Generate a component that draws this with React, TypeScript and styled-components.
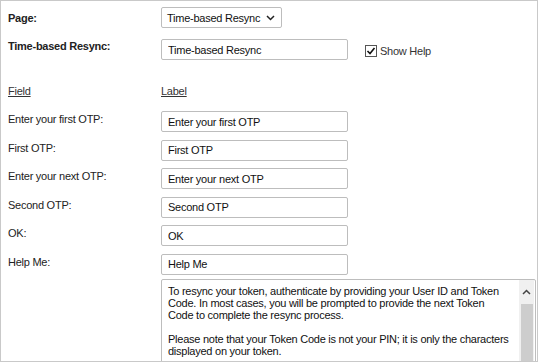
import React, { FC, useState } from 'react';
import styled, { createGlobalStyle } from 'styled-components';

const GlobalStyle = createGlobalStyle`
    html, body {
        margin: 0;
        padding: 0;
        background: #fff;
    }
    body {
        font-family: 'Liberation Sans', Arial, sans-serif;
        font-size: 11px;
        letter-spacing: -0.25px;
        color: #222;
    }
`;

const Frame = styled.div`
    box-sizing: border-box;
    width: 538px;
    height: 362px;
    border: 1px solid #c9c9c9;
    overflow: hidden;
    padding: 5px 0 0 7px;
`;

const Row = styled.div<{ $height: number }>`
    display: flex;
    align-items: flex-start;
    height: ${(p) => p.$height}px;
`;

const Label = styled.div<{ $bold?: boolean; $offset?: number }>`
    width: 153px;
    flex: none;
    font-weight: ${(p) => (p.$bold ? 'bold' : 'normal')};
    padding-top: ${(p) => p.$offset ?? 0}px;
`;

const HeaderLink = styled.span`
    width: 153px;
    flex: none;
    text-decoration: underline;
    color: #333;
`;

const Select = styled.div`
    box-sizing: border-box;
    width: 121px;
    height: 21px;
    margin-top: 1px;
    border: 1px solid #bdbdbd;
    border-radius: 2px;
    display: flex;
    align-items: center;
    justify-content: space-between;
    padding: 0 6px 0 5px;
    color: #111;
`;

const Input = styled.input`
    box-sizing: border-box;
    width: 187px;
    height: 21px;
    border: 1px solid #bdbdbd;
    border-radius: 2px;
    padding: 0 6px;
    font-family: inherit;
    font-size: 11px;
    letter-spacing: -0.25px;
    color: #111;
    margin: 0;
    outline: none;
`;

const CheckLabel = styled.label`
    display: flex;
    align-items: center;
    gap: 3px;
    margin: 6px 0 0 17px;
    color: #333;
`;

const CheckBox = styled.span`
    box-sizing: border-box;
    width: 12px;
    height: 12px;
    border: 1px solid #555;
    display: flex;
    align-items: center;
    justify-content: center;
    background: #fff;
`;

const HelpBox = styled.div`
    box-sizing: border-box;
    margin-left: 153px;
    width: 375px;
    height: 100px;
    border: 1px solid #bdbdbd;
    border-radius: 2px;
    display: flex;
`;

const HelpText = styled.div`
    flex: 1;
    padding: 5px 10px 5px 6px;
    line-height: 12px;
    color: #111;
`;

const Para = styled.p`
    margin: 0 0 12px;
`;

const Scrollbar = styled.div`
    width: 15px;
    margin-right: 1px;
    background: #f0f0f0;
    display: flex;
    flex-direction: column;
    align-items: center;
`;

const ScrollArrow = styled.div`
    height: 24px;
    display: flex;
    align-items: center;
`;

const Thumb = styled.div`
    width: 12px;
    flex: 1;
    background: #cdcdcd;
`;

const fields: { field: string; label: string; height: number }[] = [
    { field: 'Enter your first OTP:', label: 'Enter your first OTP', height: 28.5 },
    { field: 'First OTP:', label: 'First OTP', height: 28.5 },
    { field: 'Enter your next OTP:', label: 'Enter your next OTP', height: 28.5 },
    { field: 'Second OTP:', label: 'Second OTP', height: 28.5 },
    { field: 'OK:', label: 'OK', height: 28.5 },
    { field: 'Help Me:', label: 'Help Me', height: 25 },
];

const Chevron: FC = () => (
    <svg width="9" height="6" viewBox="0 0 9 6">
        <path d="M1 1l3.5 3.5L8 1" fill="none" stroke="#222" strokeWidth="1.5" />
    </svg>
);

const App: FC = () => {
    const [showHelp] = useState<boolean>(true);

    return (
        <>
            <GlobalStyle />
            <Frame>
                <Row $height={33}>
                    <Label $bold $offset={6}>Page:</Label>
                    <Select>
                        <span>Time-based Resync</span>
                        <Chevron />
                    </Select>
                </Row>
                <Row $height={46}>
                    <Label $bold $offset={1}>Time-based Resync:</Label>
                    <Input defaultValue="Time-based Resync" />
                    <CheckLabel>
                        <CheckBox>
                            {showHelp && (
                                <svg width="10" height="10" viewBox="0 0 10 10">
                                    <path d="M1.5 5l2.5 2.5L8.5 2" fill="none" stroke="#111" strokeWidth="1.6" />
                                </svg>
                            )}
                        </CheckBox>
                        Show Help
                    </CheckLabel>
                </Row>
                <Row $height={26}>
                    <HeaderLink>Field</HeaderLink>
                    <HeaderLink>Label</HeaderLink>
                </Row>
                {fields.map((f) => (
                    <Row $height={f.height} key={f.field}>
                        <Label $offset={2}>{f.field}</Label>
                        <Input defaultValue={f.label} />
                    </Row>
                ))}
                <HelpBox>
                    <HelpText>
                        <Para>
                            To resync your token, authenticate by providing your User ID and Token Code. In most
                            cases, you will be prompted to provide the next Token Code to complete the resync
                            process.
                        </Para>
                        <Para>
                            Please note that your Token Code is not your PIN; it is only the characters displayed on
                            your token.
                        </Para>
                    </HelpText>
                    <Scrollbar>
                        <ScrollArrow>
                            <svg width="9" height="6" viewBox="0 0 9 6">
                                <path d="M1 5l3.5-3.5L8 5" fill="none" stroke="#444" strokeWidth="1.5" />
                            </svg>
                        </ScrollArrow>
                        <Thumb />
                    </Scrollbar>
                </HelpBox>
            </Frame>
        </>
    );
};

export default App;
